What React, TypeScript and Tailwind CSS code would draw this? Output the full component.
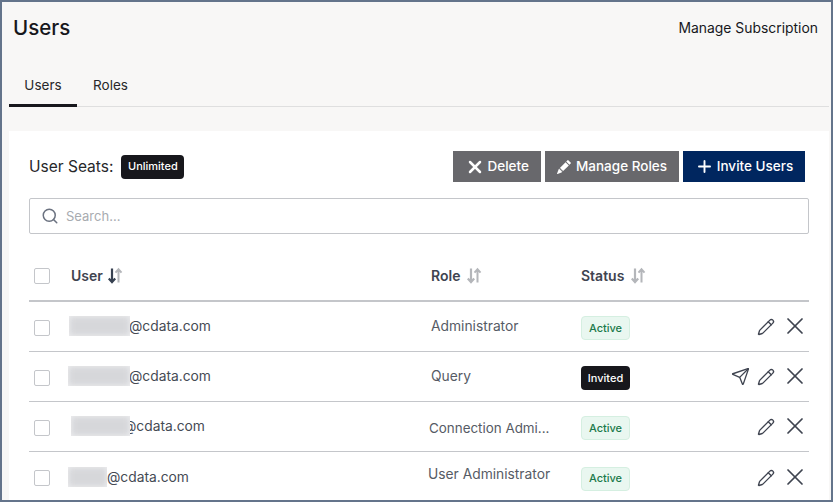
import { Pencil, Search, Send, X, Plus } from "lucide-react";
import { BsPencilFill } from "react-icons/bs";

function SortIcon({ active }: { active?: boolean }) {
  return (
    <svg width="16" height="17" viewBox="0 0 16 17" fill="none" className="shrink-0">
      <path d="M5 1.5V15M1.8 11.5 5 15l3.2-3.5" stroke={active ? "#374151" : "#b4b6ba"} strokeWidth="2.2" />
      <path d="M11.5 15.5V2.2M8.5 5.7 11.5 2.2l3 3.5" stroke="#b4b6ba" strokeWidth="2" />
    </svg>
  );
}

function Checkbox() {
  return <div className="w-4 h-4 border border-[#c4c6ca] rounded-[2px] bg-white shrink-0" />;
}

function Badge({ label }: { label: string }) {
  if (label === "Active") {
    return (
      <span className="inline-flex items-center justify-center w-[49px] h-6 rounded-[4px] border border-[#d5efe1] bg-[#e9f7f0] text-[#1b7a4b] text-[11px] font-medium">
        Active
      </span>
    );
  }
  return (
    <span className="inline-flex items-center justify-center w-[49px] h-6 rounded-[4px] bg-[#17171c] text-white text-[11px] font-medium">
      Invited
    </span>
  );
}

const rows = [
  { blur: 61, blurMl: -2, overlap: -1, role: "Administrator", roleCls: "text-[13.8px]", badge: "Active", send: false },
  { blur: 62, blurMl: -3, overlap: -1, role: "Query", roleCls: "text-[13.8px]", badge: "Invited", send: true },
  { blur: 59, blurMl: 0, overlap: -7, role: "Connection Admi...", roleCls: "-ml-[2px] mt-[3px] text-[13.4px]", badge: "Active", send: false },
  { blur: 39, blurMl: -3, overlap: 0, role: "User Administrator", roleCls: "-ml-[3px] mb-[5px] text-[13.8px]", badge: "Active", send: false },
];

export default function App() {
  return (
    <div
      className="w-[833px] h-[502px] overflow-hidden border-2 border-[#64748b] bg-[#f8f7f6] text-[#17171c] flex flex-col"
      style={{ fontFamily: "Inter, 'Noto Sans', sans-serif" }}
    >
      <div className="flex items-center justify-between h-[52px] pl-[11px] pr-[13px] shrink-0">
        <h1 className="text-[20.5px] font-medium leading-none">Users</h1>
        <a className="text-[13.9px] font-normal">Manage Subscription</a>
      </div>
      <div className="flex h-[53px] ml-[7px] mr-[2px] border-b border-[#dfdfdf] shrink-0">
        <div className="w-[68px] flex items-center justify-center text-[13.5px] text-[#27272a] border-b-[3px] border-[#17171c] -mb-px pt-[13px]">Users</div>
        <div className="w-[67px] flex items-center justify-center text-[13.5px] text-[#27272a] pt-[11px]">Roles</div>
      </div>
      <div className="mt-6 ml-[7px] mr-[2px] flex-1 bg-white px-5 pt-5 min-h-0">
        <div className="flex items-center justify-between h-[31px] pr-1">
          <div className="flex items-center gap-2">
            <span className="text-[15.5px] text-[#27272a]">User Seats:</span>
            <span className="inline-flex items-center justify-center w-[63px] h-6 rounded-[4px] bg-[#17171c] text-white text-[11px] font-medium">Unlimited</span>
          </div>
          <div className="flex gap-1 h-[31px] text-white text-[13.5px] font-medium">
            <button className="w-[88px] flex items-center justify-center gap-[2.5px] bg-[#68686c]"><X size={20} strokeWidth={3} />Delete</button>
            <button className="w-[134px] flex items-center justify-center gap-[5px] bg-[#68686c]"><BsPencilFill size={14} />Manage Roles</button>
            <button className="w-[122px] flex items-center justify-center gap-[3px] bg-[#00265f]"><Plus size={19} strokeWidth={2.4} />Invite Users</button>
          </div>
        </div>
        <div className="mt-4 h-9 border border-[#c4c6ca] rounded-[2px] flex items-center pl-[11px] gap-[7px]">
          <Search size={18} color="#6b7280" strokeWidth={2} />
          <span className="text-[13px] text-[#a8abb0] mt-px">Search...</span>
        </div>
        <div className="mt-[17px] text-[#3f4450]">
          <div className="flex items-center h-[51px] border-b-2 border-[#c4c6ca]">
            <div className="w-[42px] pl-[5px] mt-px"><Checkbox /></div>
            <div className="w-[360px] flex items-center gap-1 text-[14px] font-semibold">User <SortIcon active /></div>
            <div className="w-[150px] flex items-center gap-1.5 text-[14px] font-semibold">Role <SortIcon /></div>
            <div className="flex items-center gap-1.5 text-[14px] font-semibold">Status <SortIcon /></div>
          </div>
          {rows.map((r, i) => (
            <div key={i} className="flex items-center h-[50px] border-b border-[#c4c6ca] last:border-b-0">
              <div className="w-[42px] pl-[5px] shrink-0 mt-[2px]"><Checkbox /></div>
              <div className="w-[360px] shrink-0 flex items-center text-[13.8px] text-[#454a54]">
                <div
                  style={{ width: r.blur, marginLeft: r.blurMl, marginRight: r.overlap }}
                  className="relative z-10 h-5 overflow-hidden bg-[#f1f1f2] mt-[-1px]"
                >
                  <div className="w-full h-full bg-[#d6d7da] blur-[3px]" />
                </div>
                <span>@cdata.com</span>
              </div>
              <div className="w-[150px] shrink-0">
                <div className={`whitespace-nowrap text-[#565b65] ${r.roleCls}`}>{r.role}</div>
              </div>
              <div className="w-[90px] shrink-0 flex mt-[3px]"><Badge label={r.badge} /></div>
              <div className="flex-1 flex items-center justify-end gap-[6px] text-[#3f4450]">
                {r.send && <Send size={19} strokeWidth={1.7} className="mr-px" />}
                <Pencil size={18} strokeWidth={1.8} className="mt-px" />
                <X size={28} strokeWidth={1.5} className="-mt-px" />
              </div>
            </div>
          ))}
        </div>
      </div>
    </div>
  );
}
